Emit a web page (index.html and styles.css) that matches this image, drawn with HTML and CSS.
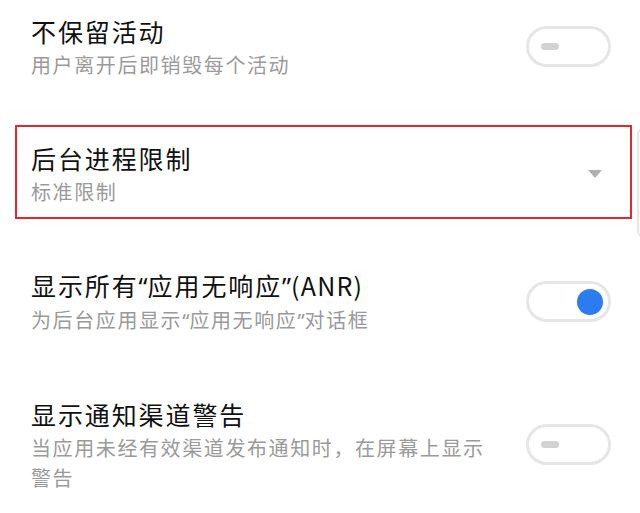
FILE: index.html
```html
<!DOCTYPE html>
<html lang="zh-CN">
<head>
    <meta charset="UTF-8">
    <meta name="viewport" content="width=device-width, initial-scale=1.0">
    <title>开发者选项</title>
    <link rel="stylesheet" href="styles.css">
</head>
<body>
    <!-- Settings list (scrolled a little) -->
    <div class="list">
        <div class="row">
            <div class="text">
                <div class="title">不保留活动</div>
                <div class="sub">用户离开后即销毁每个活动</div>
            </div>
            <div class="switch"><span class="dash"></span></div>
        </div>

        <div class="marked">
            <div class="row boxed">
                <div class="text">
                    <div class="title">后台进程限制</div>
                    <div class="sub">标准限制</div>
                </div>
                <span class="arrow"></span>
            </div>
        </div>

        <div class="row">
            <div class="text">
                <div class="title">显示所有<span class="q">“</span>应用无响应<span class="q">”</span><span class="latin">(ANR)</span></div>
                <div class="sub">为后台应用显示<span class="q">“</span>应用无响应<span class="q">”</span>对话框</div>
            </div>
            <div class="switch on"><span class="knob"></span></div>
        </div>

        <div class="row">
            <div class="text">
                <div class="title">显示通知渠道警告</div>
                <div class="sub narrow">当应用未经有效渠道发布通知时，在屏幕上显示警告</div>
            </div>
            <div class="switch"><span class="dash"></span></div>
        </div>
    </div>

    <!-- edge of the dropdown popup -->
    <div class="popup-edge"></div>
</body>
</html>
```

FILE: styles.css
```css
/* Page */
html, body {
    margin: 0;
    padding: 0;
    width: 640px;
    height: 513px;
    overflow: hidden;
    background: #ffffff;
}

body {
    position: relative;
    font-family: "Noto Sans CJK SC", "Noto Sans", sans-serif;
    color: #151515;
}

/* List */
.list {
    margin-top: -17px;
}

.row {
    display: flex;
    align-items: center;
    justify-content: space-between;
    padding: 30px 29px 30px 31px;
}

.text {
    flex: 1;
}

.title {
    font-size: 25px;
    line-height: 37px;
    letter-spacing: 1.9px;
    color: #111111;
    white-space: nowrap;
}

.sub {
    font-size: 20px;
    line-height: 30px;
    letter-spacing: 1.6px;
    color: #9a9a9a;
}

.sub.narrow {
    max-width: 460px;
}

.q {
    font-family: "Noto Sans", sans-serif;
    letter-spacing: 0;
}

.latin {
    letter-spacing: 1.2px;
}

/* Highlighted row */
.marked {
    padding: 15px 8px 18px 15px;
}

.row.boxed {
    border: 2px solid #e2282c;
    padding: 13px 28px 10px 14px;
}

.arrow {
    width: 0;
    height: 0;
    border-left: 7.5px solid transparent;
    border-right: 7.5px solid transparent;
    border-top: 8px solid #b0b0b0;
}

/* Switches */
.switch {
    box-sizing: border-box;
    width: 85px;
    height: 41px;
    border: 3px solid #e6e6e6;
    border-radius: 21px;
    display: flex;
    align-items: center;
    padding-left: 12px;
    flex-shrink: 0;
}

.switch .dash {
    width: 18px;
    height: 7px;
    border-radius: 4px;
    background: #d2d2d2;
}

.switch.on {
    justify-content: flex-end;
    padding-left: 0;
    padding-right: 5px;
}

.switch .knob {
    width: 26px;
    height: 26px;
    border-radius: 50%;
    background: #2a7df0;
}

/* popup peeking from the right */
.popup-edge {
    position: absolute;
    left: 637px;
    top: 128px;
    width: 20px;
    height: 105px;
    border: 2px solid #e6e6e6;
    border-radius: 6px;
    background: #fbfbfb;
}
```
